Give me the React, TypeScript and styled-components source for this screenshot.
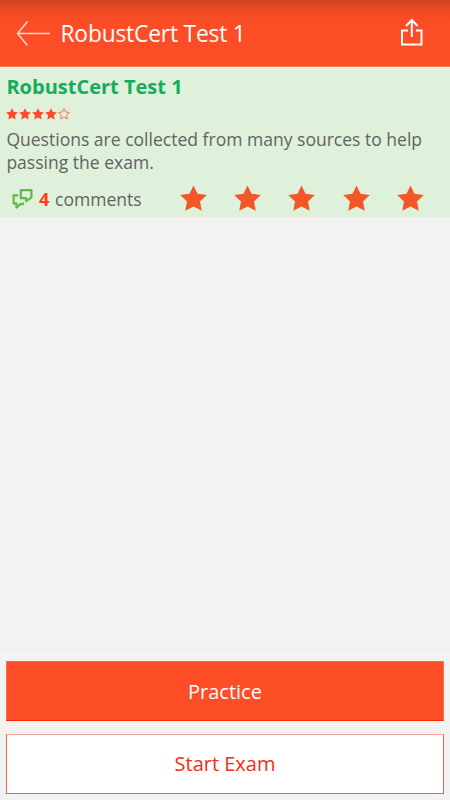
import React from "react";
import styled, { createGlobalStyle } from "styled-components";

const GlobalStyle = createGlobalStyle`
  * { box-sizing: border-box; }
  body { margin: 0; background: #f2f2f2; font-family: "Open Sans", "Noto Sans", sans-serif; }
`;

const Screen = styled.div`
  width: 450px;
  height: 800px;
  display: flex;
  flex-direction: column;
  background: #f2f2f2;
  overflow: hidden;
`;

const Header = styled.header`
  height: 67px;
  flex: none;
  display: flex;
  align-items: center;
  padding: 0 26px 0 16px;
  color: #fff;
  background: linear-gradient(#cf4220 0, #e24623 5px, #f34b25 15px, #fd4d26 27px);
  border-bottom: 1px solid #ff7957;
`;

const HeaderTitle = styled.h1`
  flex: 1;
  margin: 1px 0 0 10.5px;
  font-size: 22.8px;
  letter-spacing: -0.2px;
  line-height: 32px;
  font-weight: 400;
  white-space: nowrap;
`;

const Icon = styled.svg`
  display: block;
  flex: none;
  fill: none;
`;

const Info = styled.section`
  height: 150px;
  flex: none;
  display: flex;
  flex-direction: column;
  padding: 6px 6.4px 0;
  background: #dff1db;
  color: #636363;
  font-size: 17.55px;
`;

const TestName = styled.h2`
  margin: 0;
  font-size: 20px;
  line-height: 28px;
  font-weight: 700;
  color: #15ad5c;
`;

const Rating = styled.div`
  display: flex;
  height: 20px;
  gap: 1px;
  padding-top: 7px;
`;

const Description = styled.p`
  margin: 0;
  line-height: 23.5px;
  padding-top: 6.5px;
  white-space: nowrap;
`;

const Feedback = styled.div`
  display: flex;
  align-items: center;
  height: 36px;
  margin-top: 6.5px;
  padding-left: 5.6px;
`;

const Count = styled.strong`
  width: 10px;
  margin: 0 6px 0 6px;
  font-size: 18px;
  color: #fd3d16;
`;

const CommentsLabel = styled.span`
  width: 87px;
`;

const RateStars = styled.div`
  display: flex;
  gap: 27.2px;
  margin: 0 0 1px 38px;
`;

const Actions = styled.footer`
  margin-top: auto;
  display: flex;
  flex-direction: column;
  gap: 13px;
  padding: 6px;
  border-top: 1px solid #f8f8f8;
`;

const ActionButton = styled.button<{ $filled?: boolean }>`
  height: 60px;
  padding: ${(p) => (p.$filled ? "0" : "0 0 1px")};
  font: 400 20px "Open Sans", "Noto Sans", sans-serif;
  color: ${(p) => (p.$filled ? "#fff" : "#f42d13")};
  background: ${(p) => (p.$filled ? "#fd4d26" : "#fff")};
  border: 1px solid ${(p) => (p.$filled ? "#ff704f" : "#ee614d")};
  border-top-color: ${(p) => (p.$filled ? "#ff6847" : "#f6a097")};
  border-bottom-color: ${(p) => (p.$filled ? "#ff2500" : "#ee614d")};
`;

const STAR = "M12 0.5 L15.8 8.2 24.6 9.5 18.2 15.6 19.8 24.5 12 20.3 4.2 24.5 5.8 15.6 -0.6 9.5 8.2 8.2Z";

function Star({ size, hollow }: { size: number; hollow?: boolean }) {
  return (
    <Icon width={size} height={size} viewBox={hollow ? "-2 -1 28 28" : "-0.8 0 25.6 25.6"}>
      <path
        d={STAR}
        fill={hollow ? "none" : size > 15 ? "#f25827" : "#fd4d26"}
        stroke="#fd4d26"
        strokeWidth={hollow ? 1.7 : 0}
      />
    </Icon>
  );
}

export default function App() {
  return (
    <>
      <GlobalStyle />
      <Screen>
        <Header>
          <Icon width="34" height="27" viewBox="0 0 34 27" stroke="#ffd9ce" strokeWidth="1.5">
            <path d="M11.5 1.5 1.5 13.5 11.5 25.5M1.5 13.5H34" />
          </Icon>
          <HeaderTitle>RobustCert Test 1</HeaderTitle>
          <Icon width="24" height="30" viewBox="0 0 24 30" stroke="#fff" strokeWidth="2">
            <path d="M8 12.5H2V26.5H21.5V12.5H16M11.8 19V2M6 8 11.8 2 17.6 8" />
          </Icon>
        </Header>
        <Info>
          <TestName>RobustCert Test 1</TestName>
          <Rating>
            {[0, 1, 2, 3, 4].map((n) => (
              <Star key={n} size={12} hollow={n === 4} />
            ))}
          </Rating>
          <Description>
            Questions are collected from many sources to help
            <br />
            passing the exam.
          </Description>
          <Feedback>
            <Icon width="21" height="20" viewBox="0 0 21 20" stroke="#62b84d" strokeWidth="2.2" strokeLinejoin="round">
              <path d="M8.8 1.2H19.4V8.6L14.2 12.2V9.2H8.8Z" />
              <path d="M6.2 6.4H1.6V14.4H4.4V18.6L8.4 15.2H11V13.6" />
            </Icon>
            <Count>4</Count>
            <CommentsLabel>comments</CommentsLabel>
            <RateStars>
              {[0, 1, 2, 3, 4].map((n) => (
                <Star key={n} size={27} />
              ))}
            </RateStars>
          </Feedback>
        </Info>
        <Actions>
          <ActionButton $filled>Practice</ActionButton>
          <ActionButton>Start Exam</ActionButton>
        </Actions>
      </Screen>
    </>
  );
}
